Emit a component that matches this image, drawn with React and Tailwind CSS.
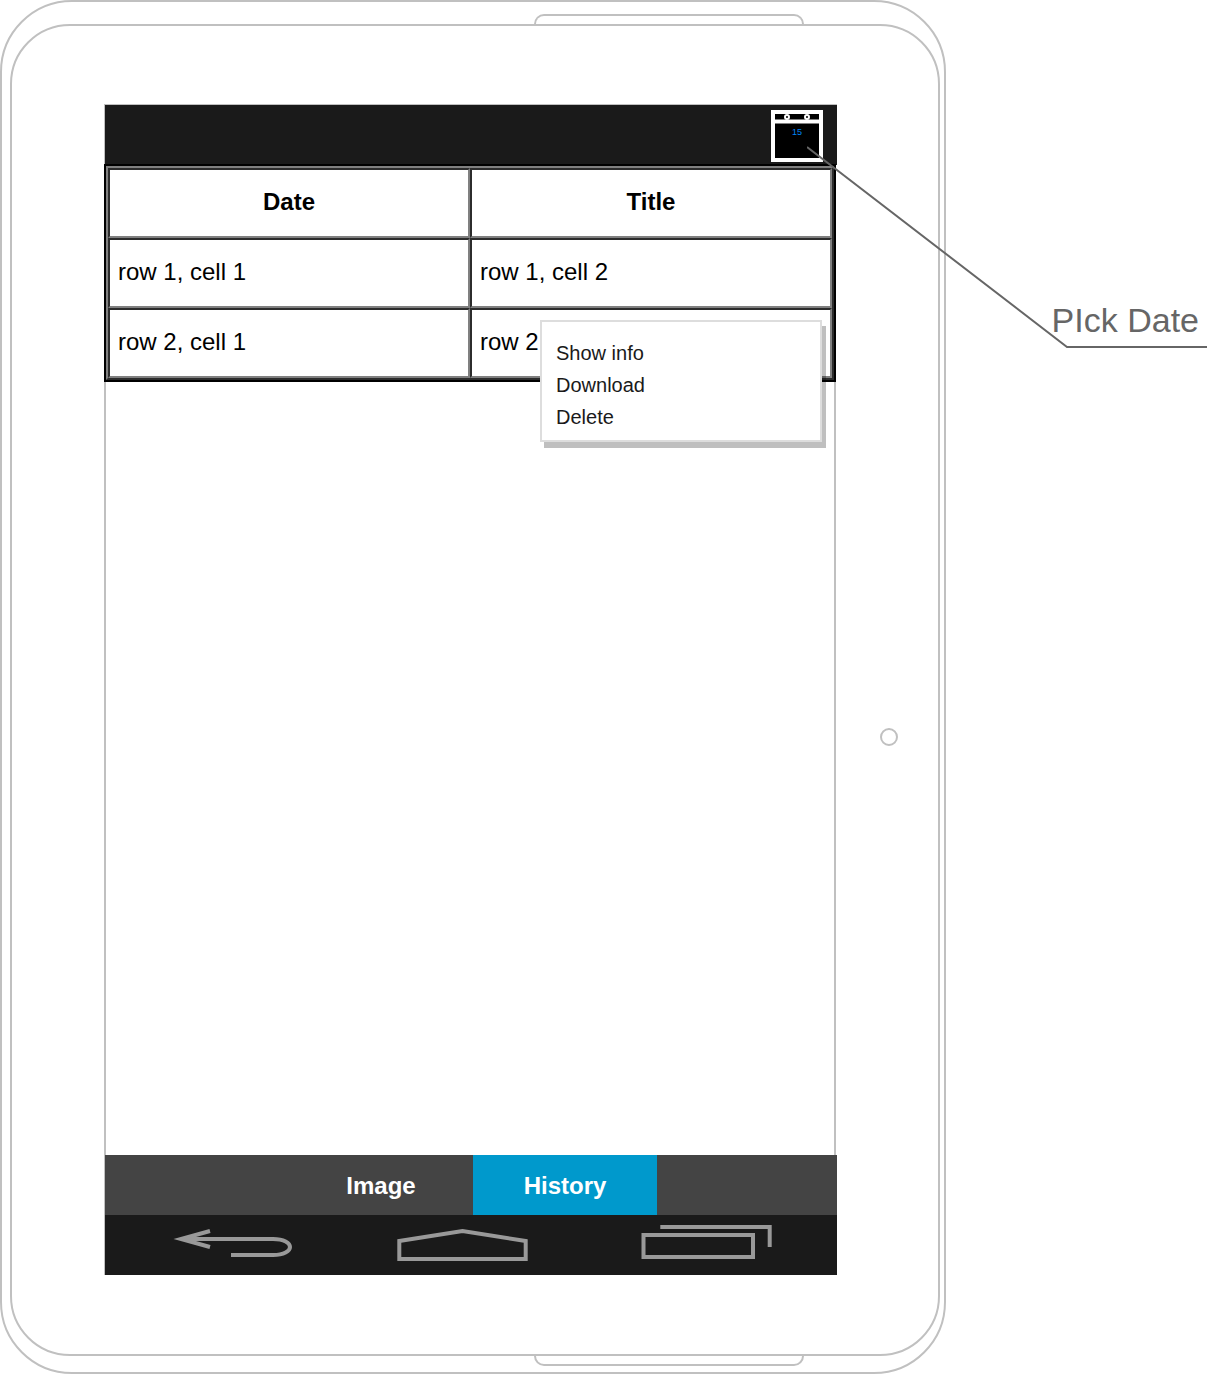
import React from "react";

const rows = [
  ["row 1, cell 1", "row 1, cell 2"],
  ["row 2, cell 1", "row 2"],
];

const cellBorder =
  "h-[70px] w-1/2 border-2 border-t-[#2c2c2c] border-l-[#2c2c2c] border-r-[#808080] border-b-[#808080] px-2 pb-0.5";

function CalendarIcon() {
  return (
    <svg width="52" height="52" viewBox="0 0 52 52" aria-hidden="true" className="block">
      <rect x="2" y="2" width="48" height="48" fill="#000" stroke="#fff" strokeWidth="4" />
      <path d="M3 11.4H49" stroke="#fff" strokeWidth="4" />
      <circle cx="16" cy="7" r="2" fill="#000" stroke="#fff" strokeWidth="2" />
      <circle cx="36" cy="7" r="2" fill="#000" stroke="#fff" strokeWidth="2" />
    </svg>
  );
}

function BackIcon() {
  return (
    <svg width="120" height="36" viewBox="173 1225 120 36" fill="none" stroke="#999" strokeWidth="4" strokeMiterlimit="10" aria-hidden="true">
      <path d="M210 1231L181 1239L210 1247" />
      <path d="M181 1239H273C284 1239 290 1243 290 1247S284 1255 273 1255H231" />
    </svg>
  );
}

function HomeIcon() {
  return (
    <svg width="131" height="36" viewBox="397 1225 131 36" fill="none" stroke="#999" strokeWidth="4" aria-hidden="true">
      <path d="M399.300 1259V1241L462.500 1231L525.700 1241V1259Z" />
    </svg>
  );
}

function RecentsIcon() {
  return (
    <svg width="131" height="36" viewBox="641 1225 131 36" fill="none" stroke="#999" strokeWidth="4" aria-hidden="true">
      <path d="M643.500 1235H753V1257H643.500Z" />
      <path d="M660.300 1227H769.700V1247" />
    </svg>
  );
}

function HistoryTable() {
  return (
    <div className="-mt-px mr-px -ml-px border-2 border-black">
      <table className="w-full table-fixed border-separate border-spacing-0 border-2 border-t-[#808080] border-l-[#808080] border-r-[#2c2c2c] border-b-[#2c2c2c] bg-white text-2xl leading-8 text-black">
        <thead>
          <tr>
            <th scope="col" className={cellBorder}>Date</th>
            <th scope="col" className={cellBorder}>Title</th>
          </tr>
        </thead>
        <tbody>
          {rows.map((row) => (
            <tr key={row[0]}>
              {row.map((cell) => (
                <td key={cell} className={cellBorder}>{cell}</td>
              ))}
            </tr>
          ))}
        </tbody>
      </table>
    </div>
  );
}

function ContextMenu() {
  return (
    <div
      role="menu"
      className="absolute top-[155px] right-[15px] flex w-[282px] flex-col border-2 border-[#ddd] bg-white px-[14px] pt-[15px] pb-[7px] shadow-[4px_6px_0_rgba(0,0,0,0.25)]"
    >
      {["Show info", "Download", "Delete"].map((item) => (
        <button key={item} role="menuitem" type="button" className="h-8 text-left text-xl leading-8 text-[#1a1a1a]">
          {item}
        </button>
      ))}
    </div>
  );
}

function Screen() {
  return (
    <main className="flex min-w-0 flex-1 flex-col border-t border-l border-[#c0c0c0]">
      <header className="flex h-[60px] items-start justify-end bg-[#1a1a1a] pt-[5px] pr-[14px]">
        <button type="button" aria-label="Pick date" className="relative">
          <CalendarIcon />
          <span className="absolute inset-x-0 top-4 text-center text-[9px] leading-3 text-[#0085f5]">15</span>
        </button>
      </header>
      <section className="relative flex flex-1 flex-col">
        <HistoryTable />
        <div className="mr-px flex-1 border-r-2 border-l border-[#c0c0c0]" />
        <ContextMenu />
      </section>
      <nav aria-label="Views" className="flex h-[60px] justify-center bg-[#444] pl-1 text-2xl font-bold text-white">
        <button type="button" className="w-[184px] pt-0.5">Image</button>
        <button type="button" aria-current="page" className="w-[184px] bg-[#0099cc] pt-0.5">History</button>
      </nav>
      <nav aria-label="System" className="flex h-[60px] items-start justify-between bg-[#1a1a1a] pt-[10px] pr-[65px] pl-[68px]">
        <button type="button" aria-label="Back"><BackIcon /></button>
        <button type="button" aria-label="Home" className="pr-[10px]"><HomeIcon /></button>
        <button type="button" aria-label="Recent apps"><RecentsIcon /></button>
      </nav>
    </main>
  );
}

function Tablet() {
  return (
    <div className="flex min-w-0 flex-1 flex-col rounded-[72px] border-2 border-[#c0c0c0] pt-3 pr-1 pb-[6px] pl-2">
      <div className="mr-[136px] h-[10px] w-[270px] self-end rounded-t-[10px] border-2 border-b-0 border-[#c0c0c0]" />
      <div className="flex flex-1 rounded-[60px] border-2 border-[#c0c0c0] pt-[78px] pb-[79px] pl-[92px]">
        <Screen />
        <div className="flex w-[101px] items-center pl-[43px]">
          <button type="button" aria-label="Power" className="mt-[95px] size-[18px] rounded-full border-2 border-[#c0c0c0]" />
        </div>
      </div>
      <div className="mr-[136px] h-[10px] w-[270px] self-end rounded-b-[10px] border-2 border-t-0 border-[#c0c0c0]" />
    </div>
  );
}

function Callout() {
  return (
    <aside className="relative w-[262px] pt-[300px] pr-[9px] text-right text-[34px] leading-10 text-[#666]">
      PIck Date
      <svg
        width="401"
        height="204"
        viewBox="807 145 401 204"
        fill="none"
        stroke="#666"
        strokeWidth="2"
        aria-hidden="true"
        className="pointer-events-none absolute top-[145px] right-0"
      >
        <path d="M807 147L1067 347H1207" />
      </svg>
    </aside>
  );
}

export default function App() {
  return (
    <div className="flex min-h-screen bg-white font-['Liberation_Sans',Arial,sans-serif]">
      <Tablet />
      <Callout />
    </div>
  );
}
